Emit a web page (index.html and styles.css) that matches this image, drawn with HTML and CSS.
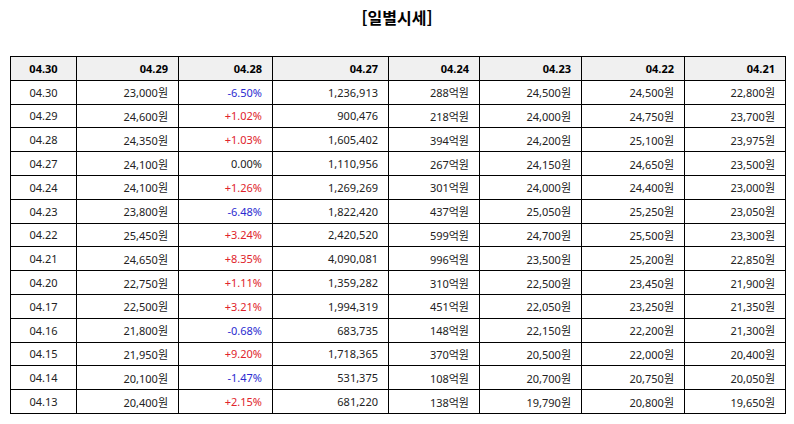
FILE: index.html
```html
<!DOCTYPE html>
<html lang="ko">
<head>
<meta charset="utf-8">
<link rel="stylesheet" href="styles.css">
</head>
<body>
<h1 class="title">[일별시세]</h1>
<table class="quotes">
<colgroup>
<col class="c1"><col class="c2"><col class="c3"><col class="c4"><col class="c5"><col class="c6"><col class="c7"><col class="c8">
</colgroup>
<thead>
<tr><th class="date">04.30</th><th>04.29</th><th>04.28</th><th>04.27</th><th>04.24</th><th>04.23</th><th>04.22</th><th>04.21</th></tr>
</thead>
<tbody>
<tr><td class="date">04.30</td><td>23,000원</td><td class="down">-6.50%</td><td>1,236,913</td><td>288억원</td><td>24,500원</td><td>24,500원</td><td>22,800원</td></tr>
<tr><td class="date">04.29</td><td>24,600원</td><td class="up">+1.02%</td><td>900,476</td><td>218억원</td><td>24,000원</td><td>24,750원</td><td>23,700원</td></tr>
<tr><td class="date">04.28</td><td>24,350원</td><td class="up">+1.03%</td><td>1,605,402</td><td>394억원</td><td>24,200원</td><td>25,100원</td><td>23,975원</td></tr>
<tr><td class="date">04.27</td><td>24,100원</td><td>0.00%</td><td>1,110,956</td><td>267억원</td><td>24,150원</td><td>24,650원</td><td>23,500원</td></tr>
<tr><td class="date">04.24</td><td>24,100원</td><td class="up">+1.26%</td><td>1,269,269</td><td>301억원</td><td>24,000원</td><td>24,400원</td><td>23,000원</td></tr>
<tr><td class="date">04.23</td><td>23,800원</td><td class="down">-6.48%</td><td>1,822,420</td><td>437억원</td><td>25,050원</td><td>25,250원</td><td>23,050원</td></tr>
<tr><td class="date">04.22</td><td>25,450원</td><td class="up">+3.24%</td><td>2,420,520</td><td>599억원</td><td>24,700원</td><td>25,500원</td><td>23,300원</td></tr>
<tr><td class="date">04.21</td><td>24,650원</td><td class="up">+8.35%</td><td>4,090,081</td><td>996억원</td><td>23,500원</td><td>25,200원</td><td>22,850원</td></tr>
<tr><td class="date">04.20</td><td>22,750원</td><td class="up">+1.11%</td><td>1,359,282</td><td>310억원</td><td>22,500원</td><td>23,450원</td><td>21,900원</td></tr>
<tr><td class="date">04.17</td><td>22,500원</td><td class="up">+3.21%</td><td>1,994,319</td><td>451억원</td><td>22,050원</td><td>23,250원</td><td>21,350원</td></tr>
<tr><td class="date">04.16</td><td>21,800원</td><td class="down">-0.68%</td><td>683,735</td><td>148억원</td><td>22,150원</td><td>22,200원</td><td>21,300원</td></tr>
<tr><td class="date">04.15</td><td>21,950원</td><td class="up">+9.20%</td><td>1,718,365</td><td>370억원</td><td>20,500원</td><td>22,000원</td><td>20,400원</td></tr>
<tr><td class="date">04.14</td><td>20,100원</td><td class="down">-1.47%</td><td>531,375</td><td>108억원</td><td>20,700원</td><td>20,750원</td><td>20,050원</td></tr>
<tr><td class="date">04.13</td><td>20,400원</td><td class="up">+2.15%</td><td>681,220</td><td>138억원</td><td>19,790원</td><td>20,800원</td><td>19,650원</td></tr>
</tbody>
</table>
</body>
</html>
```
FILE: styles.css
```css
html, body {
  margin: 0;
  padding: 0;
  background: #fff;
}
body {
  font-family: "Noto Sans", "Noto Sans CJK KR", sans-serif;
  color: #222;
  padding: 6px 10px 0 10px;
}
.title {
  margin: 0;
  height: 50px;
  text-align: center;
  font-size: 16px;
  font-weight: bold;
  line-height: 22px;
  color: #000;
  font-family: "Noto Sans CJK KR", "Noto Sans", sans-serif;
}
.quotes {
  border-collapse: collapse;
  width: 775px;
  table-layout: fixed;
  font-size: 11px;
}
.c1 { width: 66px; }
.c2 { width: 102px; }
.c3 { width: 94px; }
.c4 { width: 116px; }
.c5 { width: 91px; }
.c6 { width: 102px; }
.c7 { width: 103px; }
.c8 { width: 101px; }
.quotes tr {
  height: 23.8px;
}
.quotes th,
.quotes td {
  border: 1px solid #000;
  padding: 0 10px 0 4px;
  text-align: right;
  white-space: nowrap;
}
.quotes th {
  background: #f0f0f0;
  font-weight: bold;
  color: #000;
}
.quotes .date {
  text-align: center;
  padding: 0;
}
.quotes .up {
  color: #e0242c;
}
.quotes .down {
  color: #2b2bd0;
}
```
